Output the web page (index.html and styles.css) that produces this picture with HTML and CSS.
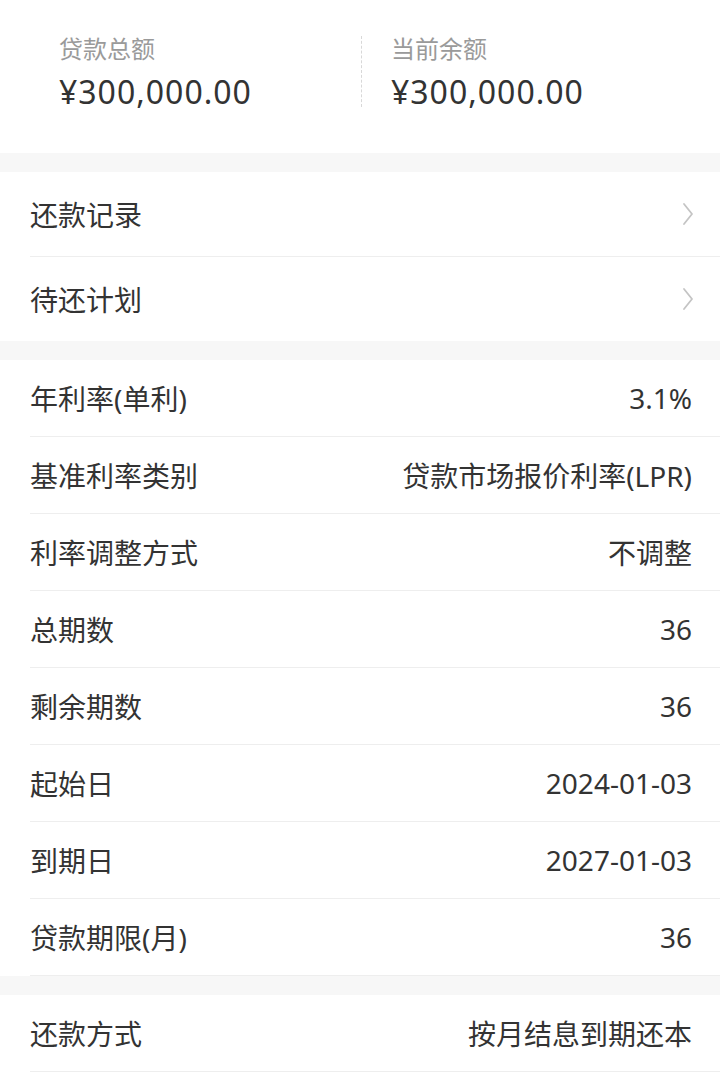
FILE: index.html
```html
<!DOCTYPE html>
<html lang="zh">
<head>
<meta charset="utf-8">
<link rel="stylesheet" href="styles.css">
</head>
<body>
<div class="summary">
  <div class="sum-item first">
    <div class="sum-label">贷款总额</div>
    <div class="sum-value">¥300,000.00</div>
  </div>
  <div class="sum-divider"></div>
  <div class="sum-item second">
    <div class="sum-label">当前余额</div>
    <div class="sum-value">¥300,000.00</div>
  </div>
</div>
<div class="section links">
  <div class="row link"><span class="label">还款记录</span><svg class="chev" viewBox="0 0 12 24" width="12" height="24"><path d="M2 2 L10 12 L2 22" fill="none" stroke="#c4c4c4" stroke-width="1.8" stroke-linecap="round" stroke-linejoin="round"/></svg></div>
  <div class="row link"><span class="label">待还计划</span><svg class="chev" viewBox="0 0 12 24" width="12" height="24"><path d="M2 2 L10 12 L2 22" fill="none" stroke="#c4c4c4" stroke-width="1.8" stroke-linecap="round" stroke-linejoin="round"/></svg></div>
</div>
<div class="section details">
  <div class="row"><span class="label">年利率(单利)</span><span class="value">3.1%</span></div>
  <div class="row"><span class="label">基准利率类别</span><span class="value">贷款市场报价利率(LPR)</span></div>
  <div class="row"><span class="label">利率调整方式</span><span class="value">不调整</span></div>
  <div class="row"><span class="label">总期数</span><span class="value">36</span></div>
  <div class="row"><span class="label">剩余期数</span><span class="value">36</span></div>
  <div class="row"><span class="label">起始日</span><span class="value">2024-01-03</span></div>
  <div class="row"><span class="label">到期日</span><span class="value">2027-01-03</span></div>
  <div class="row"><span class="label">贷款期限(月)</span><span class="value">36</span></div>
</div>
<div class="section details">
  <div class="row"><span class="label">还款方式</span><span class="value">按月结息到期还本</span></div>
  <div class="row"><span class="label"></span><span class="value"></span></div>
</div>
</body>
</html>
```

FILE: styles.css
```css
html, body {
  margin: 0;
  padding: 0;
  background: #f7f7f7;
}
body {
  font-family: "Noto Sans", "Noto Sans CJK SC", sans-serif;
  color: #333;
}
.summary {
  background: #fff;
  height: 153px;
  display: flex;
  align-items: flex-start;
  margin-bottom: 19px;
}
.sum-item {
  display: flex;
  flex-direction: column;
  padding-top: 33px;
}
.sum-item.first {
  width: 302px;
  padding-left: 59px;
}
.sum-item.second {
  padding-left: 29px;
}
.sum-divider {
  width: 0;
  height: 71px;
  margin-top: 36px;
  border-left: 1px dashed #d8d8d8;
}
.sum-label {
  font-family: "Noto Sans CJK SC", sans-serif;
  font-size: 24px;
  line-height: 30px;
  color: #9a9a9a;
}
.sum-value {
  font-size: 32px;
  line-height: 40px;
  letter-spacing: 1px;
  margin-top: 9px;
  color: #333;
}
.section {
  background: #fff;
  margin-bottom: 19px;
}
.row {
  display: flex;
  align-items: center;
  justify-content: space-between;
  margin-left: 30px;
  padding-right: 28px;
  height: 77px;
  border-bottom: 1px solid #eeeeee;
  box-sizing: border-box;
  font-size: 28px;
}
.links .row {
  height: 85px;
  padding-right: 26px;
}
.row:last-child {
  border-bottom: none;
}
.details .row:last-child {
  border-bottom: 1px solid #eeeeee;
}
.links .row:last-child {
  height: 84px;
}
.label {
  color: #333;
}
.value {
  color: #333;
  text-align: right;
}
.chev {
  display: block;
}
```
